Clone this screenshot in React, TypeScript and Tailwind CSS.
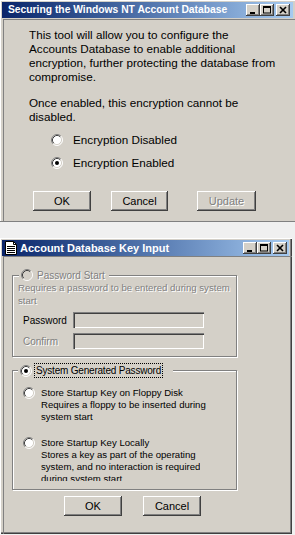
import React from "react";

const FONT = "font-['Liberation_Sans',Arial,sans-serif]";

function Radio({ checked, disabled }: { checked?: boolean; disabled?: boolean }) {
  return (
    <svg width="12" height="12" viewBox="0 0 12 12" className="shrink-0">
      <circle cx="6" cy="6" r="5" fill={disabled ? "#d4d0c8" : "#ffffff"} />
      <path d="M2.11 9.89 A5.5 5.5 0 0 1 9.89 2.11" fill="none" stroke="#808080" strokeWidth="1" />
      <path d="M2.82 9.18 A4.5 4.5 0 0 1 9.18 2.82" fill="none" stroke="#404040" strokeWidth="1" />
      <path d="M9.89 2.11 A5.5 5.5 0 0 1 2.11 9.89" fill="none" stroke="#ffffff" strokeWidth="1" />
      <path d="M9.18 2.82 A4.5 4.5 0 0 1 2.82 9.18" fill="none" stroke="#d4d0c8" strokeWidth="1" />
      {checked && <circle cx="6" cy="6" r="2" fill="#000000" />}
    </svg>
  );
}

function WinBtn({ children, disabled, w }: { children: React.ReactNode; disabled?: boolean; w: string }) {
  return (
    <div
      className={`${w} h-[20px] flex items-center justify-center bg-[#d4d0c8] text-[11px] shadow-[inset_-1px_-1px_0_#404040,inset_1px_1px_0_#ffffff,inset_-2px_-2px_0_#808080] ${
        disabled ? "text-[#808080] [text-shadow:1px_1px_0_#ffffff]" : "text-black"
      }`}
    >
      {children}
    </div>
  );
}

function CapBtn({ kind }: { kind: "min" | "max" | "close" }) {
  return (
    <div className="w-[14px] h-[12px] bg-[#d4d0c8] flex items-center justify-center shadow-[inset_-1px_-1px_0_#404040,inset_1px_1px_0_#ffffff,inset_-2px_-2px_0_#808080]">
      <svg width="10" height="8" viewBox="0 0 10 8">
        {kind === "min" && <rect x="2" y="6" width="5" height="2" fill="#000" />}
        {kind === "max" && (
          <g fill="none" stroke="#000">
            <rect x="1.5" y="0.5" width="7" height="6.5" />
            <line x1="1" y1="1.5" x2="9" y2="1.5" />
          </g>
        )}
        {kind === "close" && (
          <g stroke="#000" strokeWidth="1.6">
            <line x1="2" y1="1" x2="8" y2="7" />
            <line x1="8" y1="1" x2="2" y2="7" />
          </g>
        )}
      </svg>
    </div>
  );
}

function CapButtons() {
  return (
    <div className="ml-auto flex items-center">
      <CapBtn kind="min" />
      <CapBtn kind="max" />
      <div className="w-[2px]" />
      <CapBtn kind="close" />
    </div>
  );
}

function DocIcon() {
  return (
    <svg width="12" height="14" viewBox="0 0 12 14" className="shrink-0">
      <path d="M0.5 0.5 H8.5 L11.5 3.5 V13.5 H0.5 Z" fill="#ffffff" stroke="#000" />
      <path d="M8.5 0.5 V3.5 H11.5" fill="none" stroke="#000" />
      <g stroke="#000">
        <line x1="2" y1="5.5" x2="10" y2="5.5" />
        <line x1="2" y1="7.5" x2="10" y2="7.5" />
        <line x1="2" y1="9.5" x2="10" y2="9.5" />
        <line x1="2" y1="11.5" x2="10" y2="11.5" />
      </g>
    </svg>
  );
}

function Input() {
  return (
    <div className="w-[131px] h-[16px] bg-[#d4d0c8] shadow-[inset_1px_1px_0_#808080,inset_2px_2px_0_#404040,inset_-1px_-1px_0_#ffffff,inset_-2px_-2px_0_#d4d0c8]" />
  );
}

export default function App() {
  return (
    <div className={`w-[295px] h-[535px] bg-[#f0f0f0] flex flex-col overflow-hidden ${FONT}`}>
      {/* Window 1 */}
      <div className="h-[222px] w-[297px] shrink-0 bg-[#d4d0c8] pt-[2px] pl-[2px] flex flex-col border-b border-[#808080] shadow-[inset_1px_1px_0_#ffffff]">
        <div className="h-[16px] mr-[4px] flex items-center bg-gradient-to-r from-[#0a246a] to-[#a6caf0] pl-[6px] pr-[3px]">
          <span className="text-white font-bold text-[10.3px] leading-none whitespace-nowrap">
            Securing the Windows NT Account Database
          </span>
          <CapButtons />
        </div>
        <div className="flex-1 ml-[1px] mt-[1px] border-l border-t border-[#808080] flex flex-col pl-[25px] pt-[8px] text-[11.7px] text-black">
          <p className="leading-[14px] whitespace-nowrap">
            This tool will allow you to configure the
            <br />
            Accounts Database to enable additional
            <br />
            encryption, further protecting the database from
            <br />
            compromise.
          </p>
          <p className="mt-[12px] leading-[14px] whitespace-nowrap">
            Once enabled, this encryption cannot be
            <br />
            disabled.
          </p>
          <div className="mt-[9px] ml-[22px] flex flex-col gap-[9px]">
            <div className="h-[14px] flex items-center gap-[10px]">
              <Radio />
              <span>Encryption Disabled</span>
            </div>
            <div className="h-[14px] flex items-center gap-[10px]">
              <Radio checked />
              <span>Encryption Enabled</span>
            </div>
          </div>
          <div className="mt-[21px] ml-[4px] flex">
            <WinBtn w="w-[58px]">OK</WinBtn>
            <div className="w-[20px]" />
            <WinBtn w="w-[57px]">Cancel</WinBtn>
            <div className="w-[29px]" />
            <WinBtn w="w-[59px]" disabled>
              Update
            </WinBtn>
          </div>
        </div>
      </div>

      {/* Window 2 */}
      <div className="mt-[16px] h-[296px] w-[292px] shrink-0 bg-[#d4d0c8] pt-[2px] pl-[2px] flex flex-col shadow-[inset_1px_1px_0_#ffffff,inset_-1px_-1px_0_#404040,inset_-2px_-2px_0_#808080]">
        <div className="h-[16px] mr-[3px] flex items-center bg-gradient-to-r from-[#0a246a] to-[#a6caf0] pl-[3px] pr-[2px]">
          <DocIcon />
          <span className="ml-[3px] text-white font-bold text-[11px] leading-none whitespace-nowrap">
            Account Database Key Input
          </span>
          <CapButtons />
        </div>
        <div className="flex-1 ml-[1px] border-l border-t border-[#808080] flex flex-col text-[9.6px]">
          {/* Group 1 */}
          <fieldset className="mt-[11px] ml-[8px] w-[225px] border border-[#808080] shadow-[inset_1px_1px_0_#ffffff,1px_1px_0_#ffffff] pl-[5px] pb-[7px]">
            <legend className="ml-[1px] pl-[2px] pr-[4px] bg-[#d4d0c8] h-[14px] flex items-center gap-[4px]">
              <Radio disabled />
              <span className="text-[10px] text-[#808080] [text-shadow:1px_1px_0_#ffffff]">Password Start</span>
            </legend>
            <p className="leading-[13px] text-[#808080] [text-shadow:1px_1px_0_#ffffff] whitespace-nowrap -mt-[1px]">
              Requires a password to be entered during system
              <br />
              start
            </p>
            <div className="mt-[5px] flex items-center">
              <span className="w-[55px] pl-[5px] text-[10px] text-black">Password</span>
              <Input />
            </div>
            <div className="mt-[5px] flex items-center">
              <span className="w-[55px] pl-[5px] text-[10px] text-[#808080] [text-shadow:1px_1px_0_#ffffff]">Confirm</span>
              <Input />
            </div>
          </fieldset>

          {/* Group 2 */}
          <fieldset className="mt-[6px] ml-[8px] w-[225px] border border-[#808080] shadow-[inset_1px_1px_0_#ffffff,1px_1px_0_#ffffff] pl-[10px] pb-[8px]">
            <legend className="-ml-[5px] pl-[2px] pr-[11px] bg-[#d4d0c8] h-[15px] flex items-center gap-[3px]">
              <Radio checked />
              <span className="text-[10px] tracking-[-0.2px] text-black outline-1 outline-dotted outline-black px-[1px] leading-[13px]">
                System Generated Password
              </span>
            </legend>
            <div className="mt-[9px] flex items-start gap-[6px]">
              <div>
                <Radio />
              </div>
              <p className="leading-[12px] whitespace-nowrap">
                Store Startup Key on Floppy Disk
                <br />
                Requires a floppy to be inserted during
                <br />
                system start
              </p>
            </div>
            <div className="mt-[14px] flex items-start gap-[6px]">
              <div>
                <Radio />
              </div>
              <p className="leading-[12px] whitespace-nowrap h-[44px] overflow-hidden">
                Store Startup Key Locally
                <br />
                Stores a key as part of the operating
                <br />
                system, and no interaction is required
                <br />
                during system start
              </p>
            </div>
          </fieldset>

          <div className="mt-[6px] ml-[60px] flex gap-[21px]">
            <WinBtn w="w-[58px]">OK</WinBtn>
            <WinBtn w="w-[58px]">Cancel</WinBtn>
          </div>
        </div>
      </div>
    </div>
  );
}
